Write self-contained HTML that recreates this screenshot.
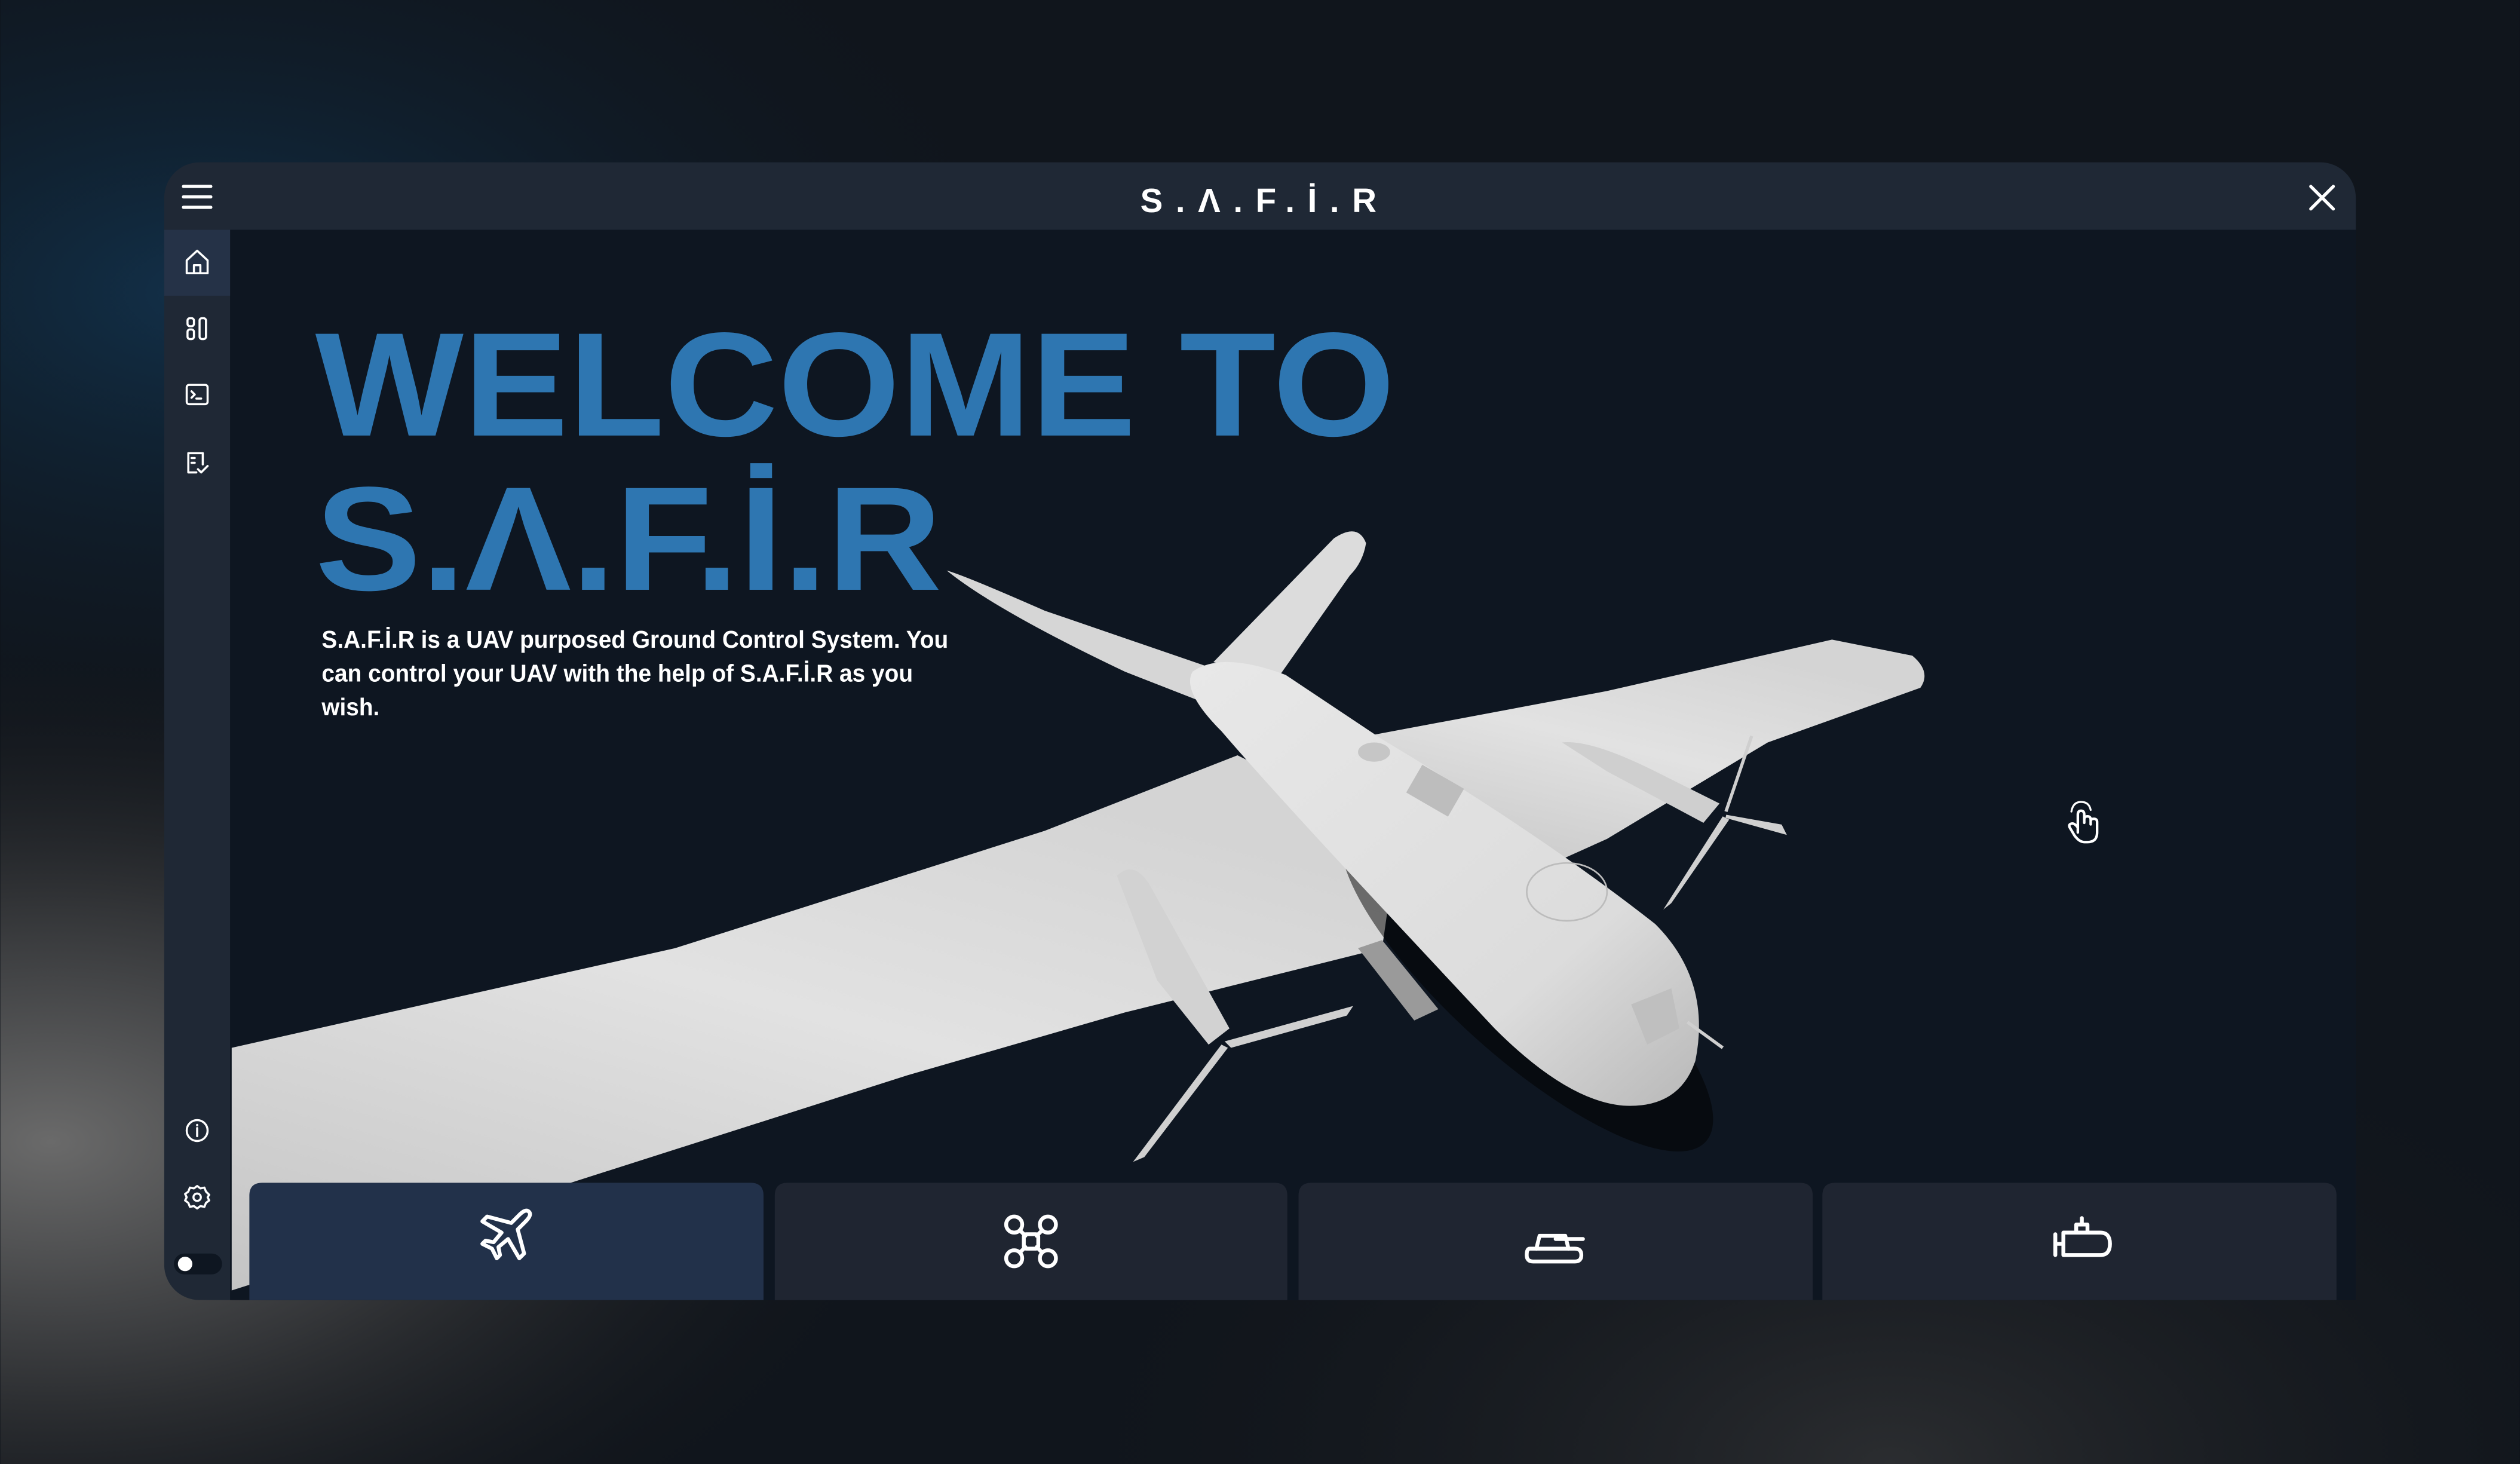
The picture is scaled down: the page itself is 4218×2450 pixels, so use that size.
<!DOCTYPE html>
<html><head><meta charset="utf-8"><style>
html,body{margin:0;padding:0;background:#0c1118;}
svg{display:block}
</style></head><body>
<svg width="4218" height="2450" viewBox="0 0 1568 911" xmlns="http://www.w3.org/2000/svg">
<defs>
<radialGradient id="bg1" cx="0.02" cy="0.78" r="0.35">
<stop offset="0" stop-color="#6a6a6a"/><stop offset="0.5" stop-color="#2e3033"/><stop offset="1" stop-color="#111418" stop-opacity="0"/>
</radialGradient>
<radialGradient id="bg2" cx="0.08" cy="0.2" r="0.35">
<stop offset="0" stop-color="#123049"/><stop offset="1" stop-color="#0d141c" stop-opacity="0"/>
</radialGradient>
<radialGradient id="bg3" cx="0.75" cy="1" r="0.35">
<stop offset="0" stop-color="#2b2d30"/><stop offset="1" stop-color="#111418" stop-opacity="0"/>
</radialGradient>
<linearGradient id="wing" x1="0" y1="1" x2="0.6" y2="0">
<stop offset="0" stop-color="#c4c4c4"/><stop offset="0.6" stop-color="#e2e2e2"/><stop offset="1" stop-color="#d4d4d4"/>
</linearGradient>
<linearGradient id="fus" x1="0" y1="0" x2="1" y2="1">
<stop offset="0" stop-color="#e8e8e8"/><stop offset="0.7" stop-color="#dcdcdc"/><stop offset="1" stop-color="#b8b8b8"/>
</linearGradient>
<clipPath id="content"><rect x="143" y="143" width="1323" height="666"/></clipPath>
</defs>
<rect width="1568" height="911" fill="#10151c"/>
<rect width="1568" height="911" fill="url(#bg2)"/>
<rect width="1568" height="911" fill="url(#bg1)"/>
<rect width="1568" height="911" fill="url(#bg3)"/>

<rect x="102" y="101" width="1364" height="708" rx="22" fill="#1f2835"/>
<rect x="143" y="143" width="1323" height="666" fill="#0e1621"/>
<rect x="102" y="143" width="41" height="41" fill="#253247"/>

<g clip-path="url(#content)">
<path d="M589 355 Q600 358 650 380 L752 415 L746 436 L700 418 Q620 380 589 355Z" fill="#d6d6d6"/>
<path d="M755 412 L830 335 Q845 325 850 338 Q848 350 840 358 L795 422Z" fill="#dcdcdc"/>
<path d="M840 460 L1000 430 L1140 398 L1190 408 Q1202 418 1195 428 L1100 462 L1000 522 L960 540 L900 510Z" fill="url(#wing)"/>
<path d="M144 652 L420 590 L650 517 L770 470 L870 520 L860 590 L700 630 L565 669 L355 736 L144 803Z" fill="url(#wing)"/>
<ellipse cx="950" cy="610" rx="150" ry="48" transform="rotate(42 950 610)" fill="#000" opacity="0.5"/>
<path d="M742 418 Q760 405 800 420 L860 460 Q960 520 1030 575 Q1065 610 1055 660 Q1045 690 1010 688 Q975 685 930 640 L860 565 Q790 490 760 455 Q735 430 742 418Z" fill="url(#fus)"/>
<rect x="878" y="482" width="30" height="20" fill="#bdbdbd" transform="rotate(30 893 492)"/>
<ellipse cx="855" cy="468" rx="10" ry="6" fill="#c6c6c6"/>
<ellipse cx="975" cy="555" rx="25" ry="18" fill="none" stroke="#bcbcbc" stroke-width="1"/>
<path d="M1015 625 L1040 615 L1045 640 L1025 650Z" fill="#bfbfbf"/>
<path d="M695 545 Q705 535 715 550 L765 640 L752 650 L720 610Z" fill="#d2d2d2"/>
<path d="M972 462 Q990 460 1030 480 L1070 500 L1060 512 L1000 480Z" fill="#cfcfcf"/>
<path d="M760 650 L705 723 L712 720 L764 652Z" fill="#d0d0d0"/>
<path d="M762 648 L842 626 L838 632 L766 652Z" fill="#d0d0d0"/>
<path d="M1072 508 L1035 566 L1040 562 L1076 510Z" fill="#d0d0d0"/>
<path d="M1074 508 L1110 518 L1108 514Z" fill="#d0d0d0" stroke="#d0d0d0" stroke-width="2"/>
<path d="M1074 505 L1090 458" stroke="#cfcfcf" stroke-width="2"/>
<path d="M1050 636 L1072 652" stroke="#cfcfcf" stroke-width="2"/>
<path d="M845 590 L880 635 L895 628 L860 585Z" fill="#9a9a9a"/>
</g>

<path d="M155 809 V744 Q155 736 163 736 H467 Q475 736 475 744 V809Z" fill="#22314a"/>
<path d="M482 809 V744 Q482 736 490 736 H793 Q801 736 801 744 V809Z" fill="#1f2531"/>
<path d="M808 809 V744 Q808 736 816 736 H1120 Q1128 736 1128 744 V809Z" fill="#1f2531"/>
<path d="M1134 809 V744 Q1134 736 1142 736 H1446 Q1454 736 1454 744 V809Z" fill="#1f2531"/>
<g fill="none" stroke="#fff" stroke-width="2.4" stroke-linecap="round" stroke-linejoin="round">
<path d="M327 760 Q331 756 329 754 Q327 752 323 756 L318 761 L303 757 L300 760 L312 767 L307 773 L302 772 L300 774 L306 777 L309 783 L311 781 L310 776 L316 771 L323 783 L326 780 L322 765Z"/>
<circle cx="631" cy="762" r="5"/><circle cx="652" cy="762" r="5"/><circle cx="631" cy="783" r="5"/><circle cx="652" cy="783" r="5"/>
<path d="M635 766 L638 769 M648 766 L645 769 M635 779 L638 776 M648 779 L645 776"/>
<rect x="637" y="768" width="9" height="9" rx="1.5"/>
<path d="M952 777 H980 Q984 777 984 781 Q984 785 980 785 H954 Q950 785 950 781 Q950 777 952 777Z"/>
<path d="M956 777 L958 769 H974 L976 777 M968 771 H985"/>
<path d="M1279 768 V781 M1279 774 H1284 M1284 767 H1307 Q1313 767 1313 774 Q1313 781 1307 781 H1284Z"/>
<path d="M1292 767 V762 H1299 V767 M1295.5 762 V758"/>
</g>

<text x="783" y="132" text-anchor="middle" font-family="Liberation Sans, sans-serif" font-weight="bold" font-size="21" fill="#fff" textLength="147" lengthAdjust="spacing">S.Λ.F.İ.R</text>
<g stroke="#fff" stroke-width="2" stroke-linecap="round">
<path d="M1438 116 L1452 130 M1452 116 L1438 130"/>
<path d="M114 116 H131 M114 122.5 H131 M114 129 H131"/>
</g>

<g fill="none" stroke="#fff" stroke-width="1.3" stroke-linejoin="round" stroke-linecap="round">
<path d="M116 162 L122.5 156 L129 162 V170 H116Z M120.5 170 V165 H124.5 V170"/>
<rect x="116.5" y="198" width="4" height="5" rx="1.5"/><rect x="116.5" y="205" width="4" height="6" rx="1.5"/><rect x="124" y="198" width="4" height="13" rx="1.5"/>
<rect x="116" y="239.5" width="13" height="12" rx="1.5"/><path d="M119 243.5 L121 245.5 L119 247.5 M122 248 H125"/>
<path d="M126 289 V282 H117 V294 H122 M119 285 H121 M119 288 H121 M123 292 L125 294 L129 290"/>
<circle cx="122.5" cy="703.5" r="6.5"/><path d="M122.5 702 V707 M122.5 700 V700.3"/>
<circle cx="122.5" cy="745" r="2.3"/>
<path d="M122.5 738 L124.5 739.5 L127 739 L128 741.5 L130 743.5 L129 745 L130 747 L128 748.5 L127 751 L124.5 750.5 L122.5 752 L120.5 750.5 L118 751 L117 748.5 L115 747 L116 745 L115 743 L117 741.5 L118 739 L120.5 739.5Z"/>
</g>
<rect x="108" y="780" width="30" height="13" rx="6.5" fill="#0e1621"/>
<circle cx="115" cy="786.5" r="4.5" fill="#fff"/>
<path d="M115 782 A4.5 4.5 0 0 0 115 791 A3 3 0 0 1 115 782Z" fill="#0e1621"/>

<g fill="none" stroke="#fff" stroke-width="1.6" stroke-linecap="round" stroke-linejoin="round">
<path d="M1293 518 V507 Q1293 504.5 1295 504.5 Q1297 504.5 1297 507 V512 M1297 510 Q1297 508 1299 508 Q1301 508 1301 510 V513 M1301 511 Q1301 509.5 1303 509.5 Q1305 509.5 1305 511.5 V518 Q1305 524 1299 524 H1297 Q1294 524 1291 520 L1288 515 Q1287 513 1289 512.5 Q1291 512 1293 515"/>
<path d="M1289 505 Q1290 499 1295 499 Q1300 499 1301 504" stroke-width="1.2"/>
</g>

<text x="196" y="271" font-family="Liberation Sans, sans-serif" font-weight="bold" font-size="92" fill="#2e76b1" textLength="672" lengthAdjust="spacingAndGlyphs">WELCOME TO</text>
<text x="196" y="367" font-family="Liberation Sans, sans-serif" font-weight="bold" font-size="92" fill="#2e76b1" textLength="390" lengthAdjust="spacingAndGlyphs">S.Λ.F.İ.R</text>
<g font-family="Liberation Sans, sans-serif" font-weight="bold" font-size="15" fill="#fff">
<text x="200" y="403" textLength="390" lengthAdjust="spacingAndGlyphs">S.A.F.İ.R is a UAV purposed Ground Control System. You</text>
<text x="200" y="424" textLength="368" lengthAdjust="spacingAndGlyphs">can control your UAV with the help of S.A.F.İ.R as you</text>
<text x="200" y="445" textLength="36" lengthAdjust="spacingAndGlyphs">wish.</text>
</g>
</svg>
</body></html>
